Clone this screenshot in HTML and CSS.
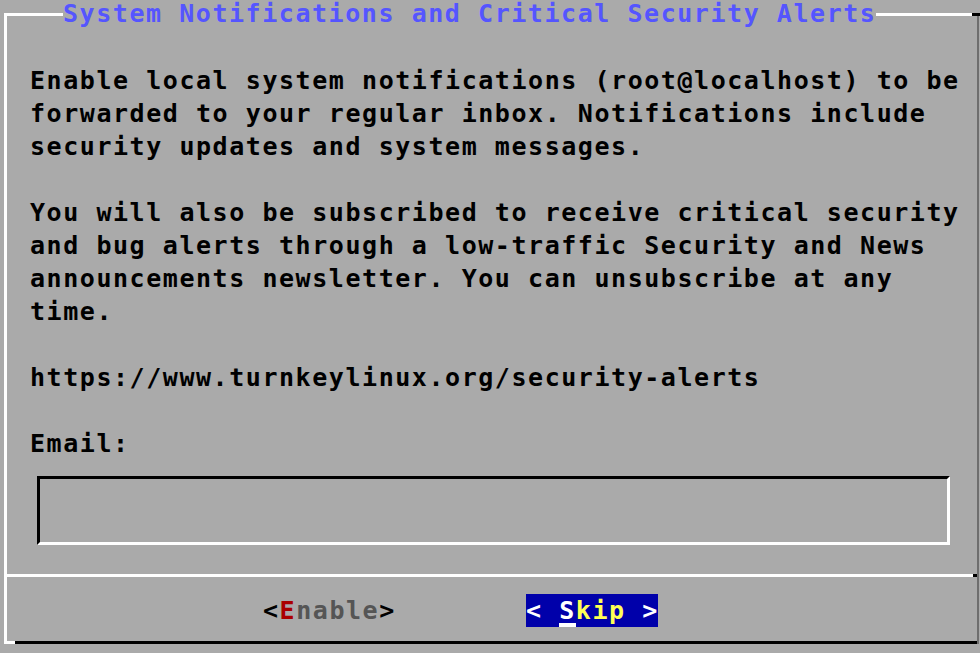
FILE: index.html
```html
<!DOCTYPE html>
<html>
  <head>
    <meta charset="utf-8" />
    <title>System Notifications and Critical Security Alerts</title>
    <link rel="stylesheet" href="styles.css">
  </head>

  <body>
    <fieldset class="dialog">
      <legend class="dialog-title">System Notifications and Critical Security Alerts</legend>

      <!-- 본문 -->
      <div class="dialog-body">
        <p class="msg">Enable local system notifications (root@localhost) to be forwarded to your regular inbox. Notifications include security updates and system messages.</p>
        <p class="msg">You will also be subscribed to receive critical security and bug alerts through a low-traffic Security and News announcements newsletter. You can unsubscribe at any time.</p>
        <p class="msg">https://www.turnkeylinux.org/security-alerts</p>
        <label class="msg label" for="email">Email:</label>
        <input class="input-box" id="email" type="text" />
      </div>

      <div class="separator"></div>

      <!-- 버튼 -->
      <div class="buttons">
        <span class="btn"><span class="hotkey">E</span><span class="dim">nable</span></span>
        <span class="btn btn-active">&lt; <span class="cursor">S</span><span class="yellow">kip</span> &gt;</span>
      </div>

      <div class="dialog-bottom"></div>
    </fieldset>
  </body>
</html>
```

FILE: styles.css
```css
/* 기본 */
body {
  margin: 0;
  background: #aaaaaa;
  color: #000;
  font-family: "DejaVu Sans Mono", "Liberation Mono", monospace;
  font-size: 25px;
  font-weight: bold;
  letter-spacing: 1.55px;
  line-height: 33px;
}

/* 대화상자 테두리 (위/왼쪽 흰색, 오른쪽 어두운색) */
.dialog {
  position: relative;
  margin: 0 1px 0 4px;
  padding: 0;
  min-width: 0;
  border: 0;
  border-top: 3px solid #fff;
  border-left: 3px solid #fff;
  border-right: 2px solid #6e6e6e;
}

/* 오른쪽 위 모서리 (검정) */
.dialog::after {
  content: "";
  position: absolute;
  top: -15px;
  right: -3px;
  width: 8px;
  height: 3px;
  background: #000;
}

.dialog-title {
  margin-left: 56px;
  padding: 0;
  color: #5555ff;
  line-height: 28px;
}

.dialog-body {
  padding: 36px 0 0 23px;
}

.msg {
  display: block;
  margin: 0 0 33px;
}

.label {
  margin: 0;
}

/* 입력칸 */
.input-box {
  display: block;
  box-sizing: border-box;
  width: 913px;
  height: 69px;
  margin: 16px 0 0 7px;
  padding: 0;
  background: transparent;
  border: 3px solid;
  border-color: #000 #fff #fff #000;
  outline: none;
}

/* 구분선 */
.separator {
  height: 3px;
  margin-top: 29px;
  background: #fff;
  border-right: 4px solid #000;
}

.buttons {
  display: flex;
  gap: 131px;
  margin-top: 17px;
  padding-left: 256px;
}

.btn {
  display: inline-block;
  width: 132px;
  height: 33px;
  white-space: pre;
}

.btn::before {
  content: "<";
}
.btn::after {
  content: ">";
}

.btn-active::before,
.btn-active::after {
  content: none;
}

.hotkey {
  color: #aa0000;
}

.dim {
  color: #555555;
}

.btn-active {
  background: #0000aa;
  color: #fff;
}

.cursor {
  display: inline-block;
  box-shadow: inset 0 -4px #fff;
}

.yellow {
  color: #ffff55;
}

/* 아래 테두리 */
.dialog-bottom {
  height: 3px;
  margin-top: 14px;
  background: #000;
  border-left: 8px solid #fff;
}
```
